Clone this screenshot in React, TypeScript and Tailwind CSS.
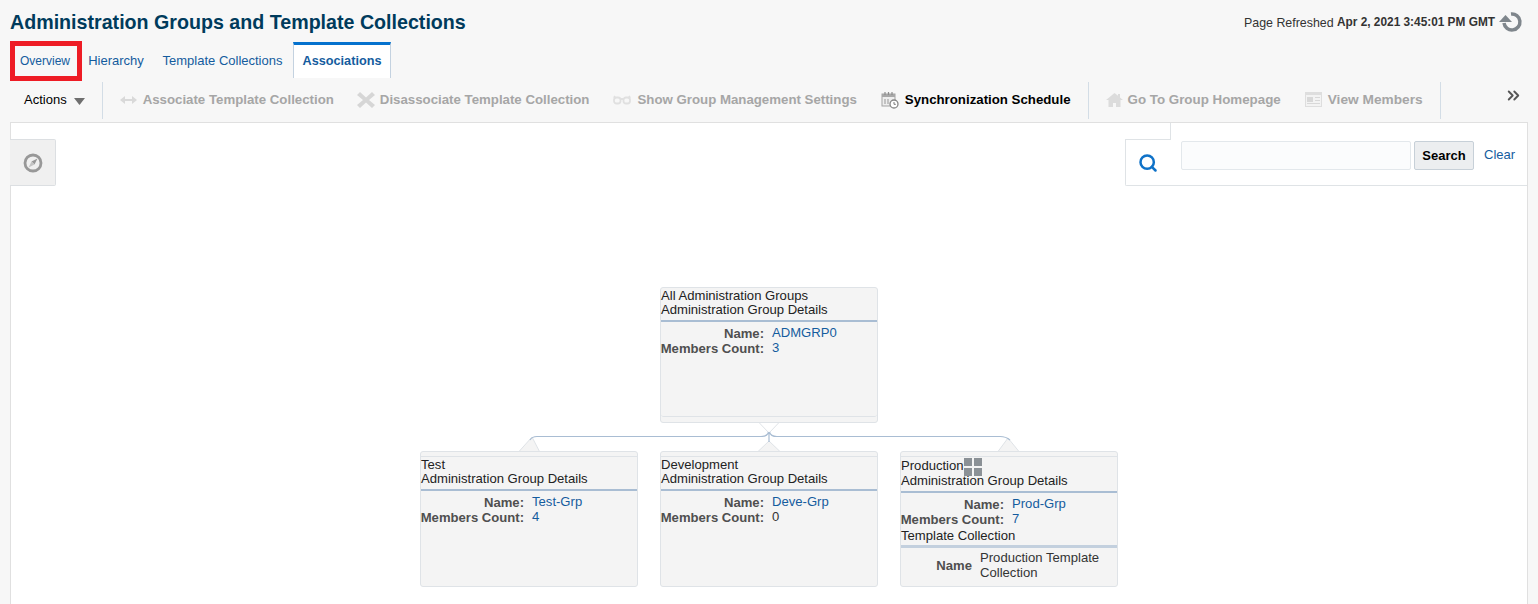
import { Search, ChevronsRight } from "lucide-react";
import type { ReactNode } from "react";

function ToolItem({ icon, label, active, className, textClass }: { icon: ReactNode; label: string; active?: boolean; className?: string; textClass?: string }) {
  return (
    <div className={`flex items-center ${className ?? ""}`}>
      {icon}
      <span className={`font-bold ${textClass ?? "text-[13.25px]"} ${active ? "text-black" : "text-[#a6a6a6]"}`}>{label}</span>
    </div>
  );
}

function Row({ label, value, link }: { label: string; value: string; link?: boolean }) {
  return (
    <div className="flex">
      <div className="flex w-[103px] shrink-0 justify-end whitespace-nowrap font-bold text-[#4f4f4f]">{label}</div>
      <div className={`ml-2 -mt-px ${link ? "text-[#145c9e]" : "text-[#333333]"}`}>{value}</div>
    </div>
  );
}

function Node({ className, children }: { className: string; children: ReactNode }) {
  return (
    <div className={`absolute h-[136px] w-[218px] rounded-[3px] border border-[#dfe3e7] bg-[#f4f4f4] text-[13.1px] leading-[14px] text-[#222222] ${className}`}>
      {children}
    </div>
  );
}

function NodeHead({ lines, extra }: { lines: string[]; extra?: ReactNode }) {
  return (
    <div className="border-b-2 border-[#a9bdd3] pt-px pb-[3px]">
      {lines.map((l, i) => (
        <div key={l} className="flex items-center">
          {l}
          {i === 0 ? extra : null}
        </div>
      ))}
    </div>
  );
}

export default function App() {
  return (
    <div className="relative h-[604px] overflow-hidden bg-[#f7f7f7] font-['Liberation_Sans',Arial,sans-serif]">
      <div className="flex h-[42px] items-center justify-between pl-[10px] pr-[14px]">
        <h1 className="mt-[2px] text-[19.65px] font-bold leading-[24px] text-[#003b5c]">Administration Groups and Template Collections</h1>
        <div className="mt-[4px] flex items-center text-[#333333]">
          <span className="text-[12.4px]">Page Refreshed&nbsp;</span>
          <b className="text-[11.85px]">Apr 2, 2021 3:45:01 PM GMT</b>
          <svg width="26" height="26" viewBox="0 0 26 26" className="ml-[3px]">
            <path d="M13 4A8 8 0 1 1 6 13" fill="none" stroke="#7f868c" strokeWidth="3.500" />
            <path d="M1 12L7.500 5 14 12z" fill="#7f868c" />
          </svg>
        </div>
      </div>

      <div className="flex h-[36px] pl-[10px] text-[13px] text-[#145c9e]">
        <div className="flex w-[70px] items-center justify-center pt-[2px] text-[12px]">Overview</div>
        <div className="flex w-[72px] items-center justify-center pt-[2px]">Hierarchy</div>
        <div className="flex w-[141px] items-center justify-center pt-[2px]">Template Collections</div>
        <div className="flex w-[98px] items-center justify-center border-x border-x-[#c4d2e0] border-t-[3px] border-t-[#0572ce] bg-white text-[12.7px] font-bold">Associations</div>
      </div>

      <div className="relative flex h-[44px] items-center pl-[24px]">
        <div className="flex items-center text-[13px] text-black">
          Actions
          <svg width="11" height="7" viewBox="0 0 11 7" className="ml-[7px] mt-[3px]">
            <path d="M0 0h11L5.500 7z" fill="#6f6f6f" />
          </svg>
        </div>
        <div className="ml-[17px] h-[37px] w-px bg-[#d3dde6]" />
        <ToolItem
          className="ml-[17px]"
          label="Associate Template Collection"
          icon={
            <svg width="17" height="10" viewBox="0 0 17 10" className="mr-[6px]">
              <path d="M0 5l5-4v3h7V1l5 4-5 4V6H5v3z" fill="#d9d9d9" />
            </svg>
          }
        />
        <ToolItem
          className="ml-[23px]"
          label="Disassociate Template Collection"
          icon={
            <svg width="18" height="18" viewBox="0 0 18 18" className="mr-[5px]">
              <path d="M3 1l6 5.500L15 1l3 3-6 5 6 5-3 3-6-5.500L3 17l-3-3 6-5-6-5z" fill="#d6d6d6" />
            </svg>
          }
        />
        <ToolItem
          className="ml-[24px]"
          label="Show Group Management Settings"
          icon={
            <svg width="18" height="10" viewBox="0 0 18 10" fill="none" stroke="#e0e0e0" strokeWidth="1.800" className="mr-[6px]">
              <rect x="1" y="2.500" width="6.500" height="6" rx="2.500" />
              <rect x="10.500" y="2.500" width="6.500" height="6" rx="2.500" />
              <path d="M7.500 4h3M1 3l1-2M17 3l-1-2" />
            </svg>
          }
        />
        <ToolItem
          className="ml-[24px]"
          active
          label="Synchronization Schedule"
          icon={
            <svg width="18" height="18" viewBox="0 0 18 18" className="mr-[6px]">
              <rect x="1" y="3" width="13" height="12" fill="#eeeeee" stroke="#a3a3a3" />
              <rect x="1" y="3" width="13" height="3" fill="#a8a8a8" />
              <path d="M4 1v3M7.500 1v3M11 1v3" stroke="#8d8d8d" strokeWidth="1.200" />
              <path d="M3 8h2v5H3zM6 8h2v5H6z" fill="#c2c2c2" />
              <circle cx="13" cy="13" r="4" fill="#fff" stroke="#868686" strokeWidth="1.300" />
              <path d="M13 11v2.300h1.800" stroke="#777777" fill="none" />
            </svg>
          }
        />
        <div className="ml-[17px] h-[37px] w-px bg-[#d3dde6]" />
        <ToolItem
          className="ml-[17px]"
          label="Go To Group Homepage"
          textClass="text-[13.35px]"
          icon={
            <svg width="17" height="15" viewBox="0 0 17 15" className="mr-[5px]">
              <path d="M8.500 1L0 8h2.500v7H7v-4h3v4h4.500V8H17l-3-2.500V2h-2v1.800z" fill="#dcdcdc" />
            </svg>
          }
        />
        <ToolItem
          className="ml-[24px]"
          label="View Members"
          textClass="text-[13.7px]"
          icon={
            <svg width="17" height="15" viewBox="0 0 17 15" className="mr-[6px]">
              <rect width="17" height="15" fill="#dedede" />
              <rect x="1" y="3" width="15" height="11" fill="#f3f3f3" />
              <path d="M2 5h6v5H2zM10 5h5v1h-5zM10 8h5v1h-5zM2 11h13v1H2z" fill="#d8d8d8" />
            </svg>
          }
        />
        <div className="ml-[17px] h-[37px] w-px bg-[#d3dde6]" />
        <ChevronsRight className="absolute left-[1504px] top-[8px] text-[#555555]" size={19} strokeWidth={2.400} />
      </div>

      <div className="absolute left-[10px] right-[10px] top-[122px] bottom-0 border-x border-t border-[#e0e0e0] bg-white">
        <div className="absolute -left-px top-[16px] flex h-[47px] w-[46px] items-center justify-center rounded-r-[2px] border-y border-r border-[#dcdfe2] bg-[#f0f0f0]">
          <svg width="20" height="20" viewBox="0 0 20 20">
            <circle cx="10" cy="10" r="8" fill="none" stroke="#989898" strokeWidth="2.800" />
            <path d="M14.500 5.500L11.500 11.500 8.500 8.500z" fill="#989898" />
            <path d="M5.500 14.500L8.500 8.500 11.500 11.500z" fill="#c4c4c4" />
          </svg>
        </div>

        <div className="absolute left-[1114px] right-0 top-[16px] flex h-[47px] rounded-bl-[2px] border-b border-l border-t border-[#dfe3e6] bg-white">
          <Search className="ml-[12px] mt-[13px] text-[#0f72c8]" size={20} strokeWidth={3} />
          <div className="absolute left-[55px] top-[1px] h-[29px] w-[230px] rounded-[2px] border border-[#e3e8ec] bg-[#fbfcfd]" />
          <div className="absolute left-[288px] top-[1px] flex h-[29px] w-[60px] items-center justify-center rounded-[2px] border border-[#c7d0d8] bg-[#eceef0] text-[13px] font-bold text-black">Search</div>
          <div className="absolute left-[358px] top-[7px] text-[13px] leading-[15px] text-[#145c9e]">Clear</div>
        </div>
        <div className="absolute left-[1159px] top-0 h-[17px] w-px bg-[#dfe3e6]" />
        <div className="absolute left-[1160px] right-0 top-[16px] h-px bg-white" />

        {/* connectors, viewBox is in page coordinates */}
        <svg className="absolute left-[500px] top-[298px]" width="520" height="32" viewBox="511 421 520 32" fill="none">
          <path d="M758 421.500L769 433 780 421.500" fill="#ffffff" stroke="#dfe3e7" />
          <path d="M758 451.500L769 441 780 451.500" fill="#f4f4f4" stroke="#dfe3e7" />
          <path d="M519 451.500L532 437 539.500 451.500" fill="#f4f4f4" stroke="#dfe3e7" />
          <path d="M998 451.500L1008 438 1019 451.500" fill="#f4f4f4" stroke="#dfe3e7" />
          <path d="M530 440Q532 436.500 537 436.500H761Q767.500 436.500 768.500 432M769.500 432Q770.500 436.500 777 436.500H1000Q1006 436.500 1010 440M769 433V442" stroke="#a9bdd3" strokeWidth="1.200" />
        </svg>

        <Node className="left-[649px] top-[164px]">
          <div className="h-[129px] rounded-[3px] border-b border-[#dfe3e7]">
            <NodeHead lines={["All Administration Groups", "Administration Group Details"]} />
            <div className="pt-[4px] leading-[15px]">
              <Row label="Name:" value="ADMGRP0" link />
              <Row label="Members Count:" value="3" link />
            </div>
          </div>
        </Node>

        <Node className="left-[409px] top-[328px] pt-[4px]">
          <div className="border-t border-[#dfe3e7]">
            <NodeHead lines={["Test", "Administration Group Details"]} />
            <div className="pt-[4px] leading-[15px]">
              <Row label="Name:" value="Test-Grp" link />
              <Row label="Members Count:" value="4" link />
            </div>
          </div>
        </Node>

        <Node className="left-[649px] top-[328px] pt-[4px]">
          <div className="border-t border-[#dfe3e7]">
            <NodeHead lines={["Development", "Administration Group Details"]} />
            <div className="pt-[4px] leading-[15px]">
              <Row label="Name:" value="Deve-Grp" link />
              <Row label="Members Count:" value="0" />
            </div>
          </div>
        </Node>

        <Node className="left-[889px] top-[328px] pt-[4px]">
          <div className="border-t border-[#dfe3e7]">
            <NodeHead
              lines={["Production", "Administration Group Details"]}
              extra={
                <svg width="18" height="18" viewBox="0 0 18 18" className="-mb-[2px]">
                  <path d="M0 0h8v8H0zM10 0h8v8h-8zM0 10h8v8H0zM10 10h8v8h-8z" fill="#8b9196" />
                </svg>
              }
            />
            <div className="pt-[4px] leading-[15px]">
              <Row label="Name:" value="Prod-Grp" link />
              <Row label="Members Count:" value="7" link />
              <div className="border-b-[3px] border-[#c3d0de] pt-px pb-[2px]">Template Collection</div>
              <div className="flex items-center pt-[2px]">
                <div className="w-[71px] shrink-0 text-right font-bold text-[#4f4f4f]">Name</div>
                <div className="ml-2 text-[#333333]">Production Template Collection</div>
              </div>
            </div>
          </div>
        </Node>
      </div>

      <div className="absolute left-[10px] top-[41px] h-[40px] w-[72px] border-[5px] border-[#ee1c25]" />
    </div>
  );
}
